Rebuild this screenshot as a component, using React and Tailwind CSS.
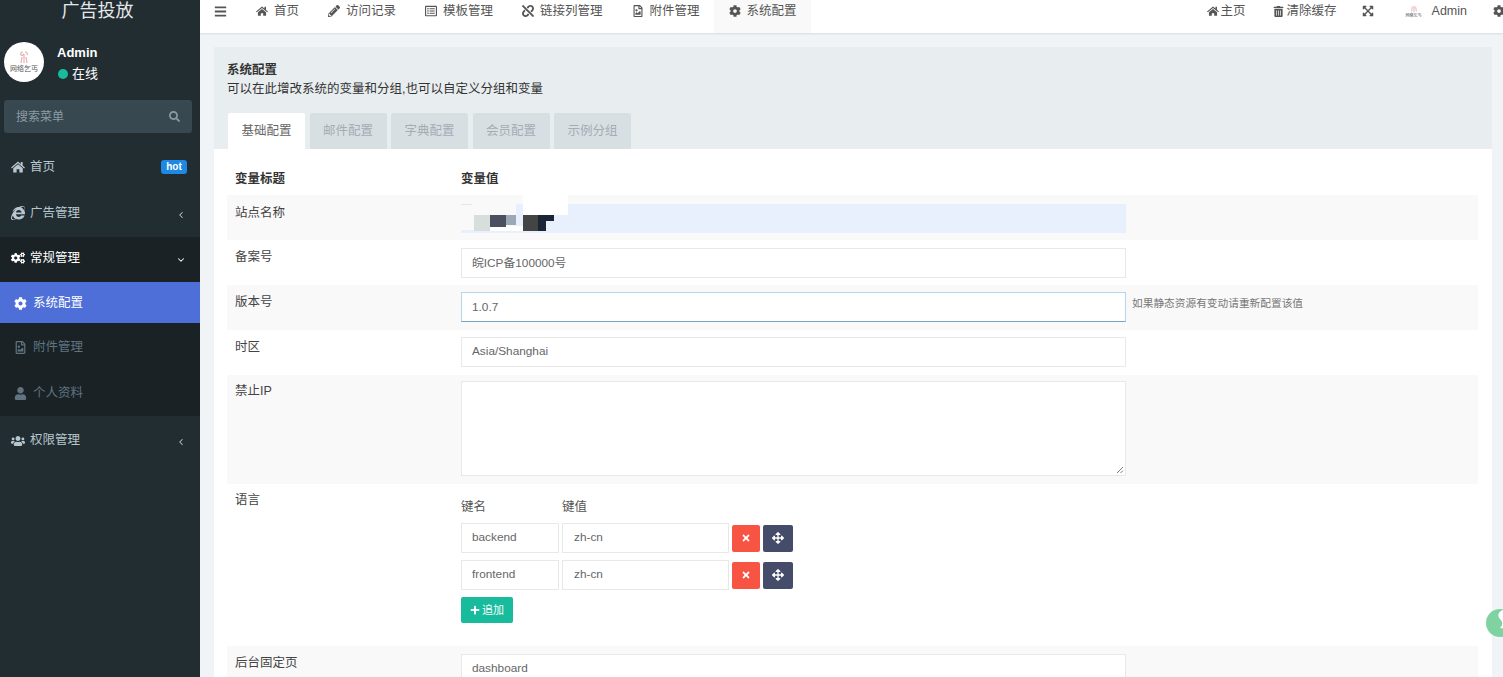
import React from 'react';
import {
  FaPencilAlt, FaInternetExplorer, FaCogs, FaCog, FaRegFileImage, FaUser, FaUsers, FaBars, FaSearch,
  FaTrashAlt, FaExpandArrowsAlt, FaTimes, FaArrowsAlt, FaPlus, FaUnlink, FaRegListAlt,
} from 'react-icons/fa';
import { ChevronLeft, ChevronDown } from 'lucide-react';

const font = { fontFamily: '"Liberation Sans", "Noto Sans CJK SC", sans-serif' };

// old-style home glyph: roof with chimney over a body with a door
const HomeIcon = () => (
  <svg viewBox="0 0 14 12" className="h-[0.85em] w-[1em]" fill="currentColor">
    <path d="M7 0.500 0 6.500l.8 1L7 2.300l6.200 5.200.8-1-2.300-2V1h-1.800v2z" />
    <path d="M7 3.400 2.200 7.400V11.500h3.400V8.400h2.800v3.100h3.400V7.400z" />
  </svg>
);

const Avatar = () => (
  <div className="flex h-10 w-10 flex-col items-center justify-center rounded-full bg-white">
    <svg viewBox="0 0 20 14" className="h-[14px] w-5">
      <path d="M9 1c-2 0-3 2-2 3s2 0 3-1M11 1c2 0 3 2 2 3M10 3v9M8 6l-1 6M12 6l1 6" fill="none" stroke="#e6b3b3" strokeWidth="1.2" />
    </svg>
    <span className="text-[7px] leading-[8px] text-[#555]">网络乞丐</span>
  </div>
);

const SideItem = ({ icon, label, h, badge, arrow, className = '' }) => (
  <div className={`flex items-center pl-[11px] pr-[13px] text-[#b8c7ce] ${h} ${className}`}>
    <span className="flex w-[19px] justify-start text-[14px]">{icon}</span>
    <span className="text-[12.5px]">{label}</span>
    {badge && <span className="ml-auto w-[26px] rounded-[3px] bg-[#1e88e5] text-center text-[10px] font-bold leading-[14px] text-white">{badge}</span>}
    {arrow && <span className="ml-auto mt-[3px] mr-[1px]">{arrow}</span>}
  </div>
);

const SubItem = ({ icon, label, className }) => (
  <div className={`flex items-center pl-[14px] text-[12.5px] ${className}`}>
    <span className="flex w-[19px] text-[13px]">{icon}</span>
    {label}
  </div>
);

const Sidebar = () => (
  <aside className="flex h-full w-[200px] shrink-0 flex-col bg-[#222d32]">
    <div className="flex h-[21px] items-center justify-center pr-[5px] pt-[2px] text-[18px] text-[#e4e8ea]">广告投放</div>
    <div className="mt-[21px] flex h-[40px] pl-[4px]">
      <Avatar />
      <div className="ml-[13px] flex flex-col justify-center gap-[6px] pt-[2px] text-[13px] leading-[15px] text-white">
        <span className="font-bold">Admin</span>
        <span className="flex items-center gap-[4px]"><i className="ml-[1px] h-[10px] w-[10px] rounded-full bg-[#18bc9c]" />在线</span>
      </div>
    </div>
    <div className="mx-[4px] mt-[18px] flex h-[33px] w-[188px] items-center justify-between rounded-[3px] bg-[#374850] px-[12px] text-[12px] text-[#8c9ba3]">
      搜索菜单
      <FaSearch className="text-[11px]" />
    </div>
    <div className="mt-[11px]">
      <SideItem icon={<HomeIcon />} label="首页" h="h-[45px] pt-[1px]" badge="hot" />
      <SideItem icon={<FaInternetExplorer />} label="广告管理" h="h-[48px]" arrow={<ChevronLeft size={10} strokeWidth={2.5} />} />
      <div className="bg-[#1a2226]">
        <SideItem icon={<FaCogs />} label="常规管理" h="h-[45px] pb-[3px]" arrow={<ChevronDown size={10} strokeWidth={2.5} />} className="!text-white" />
        <SubItem icon={<FaCog />} label="系统配置" className="h-[41px] bg-[#4e6fd8] pt-[1px] text-white" />
        <SubItem icon={<FaRegFileImage />} label="附件管理" className="h-[48px] text-[#5f7480]" />
        <SubItem icon={<FaUser />} label="个人资料" className="h-[45px] text-[#5f7480]" />
      </div>
      <SideItem icon={<FaUsers />} label="权限管理" h="h-[48px] pt-[1px]" arrow={<ChevronLeft size={10} strokeWidth={2.5} />} />
    </div>
  </aside>
);

const NavTab = ({ icon, label, active }) => (
  <div className={`flex h-full items-center gap-[6px] px-[14.5px] pb-[11px] text-[12.5px] text-[#555] ${active ? 'bg-[#f9f9f9]' : ''}`}>
    <span className="text-[12px]">{icon}</span>
    {label}
  </div>
);

const TopBar = () => (
  <header className="flex h-[33px] shrink-0 items-start justify-between bg-white shadow-[0_1px_2px_rgba(0,0,0,0.1)]">
    <div className="flex h-[33px] items-center text-[#555]">
      <span className="w-[41.5px] pb-[11px] pl-[14px] text-[13px]"><FaBars /></span>
      <NavTab icon={<HomeIcon />} label="首页" />
      <NavTab icon={<FaPencilAlt />} label="访问记录" />
      <NavTab icon={<FaRegListAlt />} label="模板管理" />
      <NavTab icon={<FaUnlink />} label="链接列管理" />
      <NavTab icon={<FaRegFileImage />} label="附件管理" />
      <NavTab icon={<FaCog />} label="系统配置" active />
    </div>
    <div className="flex h-[22px] items-center text-[12.5px] text-[#555]">
      <span className="flex items-center gap-[2px]"><span className="text-[12px]"><HomeIcon /></span>主页</span>
      <span className="ml-[27px] flex items-center gap-[3px]"><FaTrashAlt className="text-[11px]" />清除缓存</span>
      <FaExpandArrowsAlt className="ml-[25px] text-[12px]" />
      <span className="ml-[30px] flex w-[20px] flex-col items-center">
        <svg viewBox="0 0 20 10" className="h-[10px] w-[16px]"><path d="M10 1v8M8 2l-1 6M12 2l1 6" fill="none" stroke="#e6b3b3" strokeWidth="1.2" /></svg>
        <span className="text-[4px] leading-[4px]">网络乞丐</span>
      </span>
      <span className="ml-[8px]">Admin</span>
      <FaCog className="ml-[26px] mr-[-2px] text-[12px]" />
    </div>
  </header>
);

const Input = ({ value, className = '' }) => (
  <div className={`flex h-[30px] items-center border border-[#e8e8e8] bg-white pl-[10px] text-[11.8px] text-[#666] ${className}`}>{value}</div>
);

const Row = ({ title, stripe, titleClass = 'pt-[9px]', className = '', children }) => (
  <div className={`flex pl-[8px] ${stripe ? 'bg-[#f9f9f9]' : 'bg-white'} ${className}`}>
    <div className={`w-[226px] shrink-0 text-[12.5px] leading-[16px] text-[#444] ${titleClass}`}>{title}</div>
    <div className="min-w-0 flex-1">{children}</div>
  </div>
);

// redacted value: mosaic patches over the autofilled field
const SiteNameField = () => (
  <div className="relative h-[45px]">
    <div className="absolute left-[55px] top-[9px] h-[29px] w-[610px] bg-[#e8f0fe]" />
    <div className="absolute left-0 top-[9px] h-[1px] w-[11px] bg-[#dfe7f5]" />
    <div className="absolute left-0 top-[35px] h-[3px] w-[62px] bg-[#e8f0fe]" />
    <div className="absolute left-[62px] top-0 h-[20px] w-[45px] bg-white" />
    <div className="absolute left-[19px] top-[31px] h-[5px] w-[43px] bg-white" />
    <div className="absolute left-[13px] top-[20px] h-[16px] w-[16px] bg-[#d8dedc]" />
    <div className="absolute left-[29px] top-[20px] h-[12px] w-[16px] bg-[#4a5060]" />
    <div className="absolute left-[45px] top-[20px] h-[10px] w-[10px] bg-[#9aa8b8]" />
    <div className="absolute left-[62px] top-[20px] h-[16px] w-[15px] bg-[#444444]" />
    <div className="absolute left-[77px] top-[20px] h-[16px] w-[8px] bg-[#1a2635]" />
    <div className="absolute left-[85px] top-[20px] h-[6px] w-[8px] bg-[#1a2635]" />
  </div>
);

const KeyRow = ({ name, value }) => (
  <div className="flex h-[30px] items-center">
    <Input value={name} className="w-[98px]" />
    <Input value={value} className="ml-[3px] w-[167px] pl-[11px]" />
    <span className="ml-[3px] flex h-[27px] w-[28px] items-center justify-center rounded-[2px] bg-[#f75444] text-[10px] text-white"><FaTimes /></span>
    <span className="ml-[3px] flex h-[27px] w-[30px] items-center justify-center rounded-[2px] bg-[#444c69] text-[12px] text-white"><FaArrowsAlt /></span>
  </div>
);

const ConfigPanel = () => (
  <section className="ml-[14px] mr-[11px] mt-[14px] flex-1 bg-white">
    <div className="h-[102px] bg-[#e8edf0] pl-[13px] pt-[15px]">
      <div className="text-[12.5px] font-bold leading-[17px] text-[#333]">系统配置</div>
      <div className="text-[12.5px] leading-[20px] text-[#333]">可以在此增改系统的变量和分组,也可以自定义分组和变量</div>
      <div className="ml-[1px] mt-[14px] flex gap-[4.5px] text-[12.5px]">
        <span className="flex h-[36px] w-[77px] items-center justify-center rounded-t-[2px] bg-white text-[#666]">基础配置</span>
        {['邮件配置', '字典配置', '会员配置', '示例分组'].map((tab) => (
          <span key={tab} className="flex h-[36px] w-[77px] items-center justify-center rounded-t-[2px] bg-[#d8dfe3] text-[#a3adb3]">{tab}</span>
        ))}
      </div>
    </div>
    <div className="ml-[13px] mr-[14px] mt-[11px]">
      <div className="flex h-[35px] items-start pl-[8px] pt-[11px] text-[12.5px] font-bold leading-[16px] text-[#333]">
        <span className="w-[226px]">变量标题</span>
        <span>变量值</span>
      </div>
      <Row title="站点名称" stripe titleClass="pt-[10px]" className="h-[45px]"><SiteNameField /></Row>
      <Row title="备案号" className="h-[45px]"><Input value="皖ICP备100000号" className="mt-[8px] w-[665px] pt-[1px]" /></Row>
      <Row title="版本号" stripe className="h-[45px]">
        <div className="flex items-center pt-[7px]">
          <Input value="1.0.7" className="w-[665px] pt-[1px] !border-[#b5d6ea] !border-b-[#7ba3c0]" />
          <span className="ml-[6px] mb-[8px] text-[10.7px] text-[#777]">如果静态资源有变动请重新配置该值</span>
        </div>
      </Row>
      <Row title="时区" className="h-[45px]"><Input value="Asia/Shanghai" className="mt-[7px] w-[665px]" /></Row>
      <Row title="禁止IP" stripe titleClass="pt-[8px]" className="h-[109px]">
        <div className="relative mt-[6px] h-[95px] w-[665px] border border-[#e8e8e8] bg-white">
          <svg viewBox="0 0 8 8" className="absolute bottom-[1px] right-[1px] h-2 w-2"><path d="M1 7 7 1M4.500 7 7 4.500" stroke="#777" fill="none" /></svg>
        </div>
      </Row>
      <Row title="语言" titleClass="pt-[8px]" className="h-[162px]">
        <div className="flex h-[39px] items-center pt-[8px] text-[12.5px] text-[#555]">
          <span className="w-[101px]">键名</span>
          <span>键值</span>
        </div>
        <div className="flex flex-col gap-[7px]">
          <KeyRow name="backend" value="zh-cn" />
          <KeyRow name="frontend" value="zh-cn" />
        </div>
        <span className="mt-[7px] flex h-[26px] w-[52px] items-center justify-center gap-[2px] rounded-[2px] bg-[#18bc9c] text-[11px] text-white"><FaPlus className="text-[10px]" />追加</span>
      </Row>
      <Row title="后台固定页" stripe className="h-[60px]"><Input value="dashboard" className="mt-[8px] w-[665px]" /></Row>
    </div>
  </section>
);

export default function App() {
  return (
    <div className="relative flex h-screen w-full overflow-hidden bg-[#f1f4f7]" style={font}>
      <Sidebar />
      <main className="flex min-w-0 flex-1 flex-col overflow-hidden">
        <TopBar />
        <ConfigPanel />
      </main>
      {/* floating chat bubble, cut off by the window edge */}
      <svg viewBox="0 0 28 28" className="absolute left-[1486px] top-[609px] h-[28px] w-[28px]">
        <circle cx="14" cy="14" r="14" fill="#7fd3a0" />
        <path d="M17 1c-5 2-6 6-3 9 3 3 3 6 0 9 4 1 9-1 11-5 2-5-2-12-8-13z" fill="#fff" />
      </svg>
    </div>
  );
}
